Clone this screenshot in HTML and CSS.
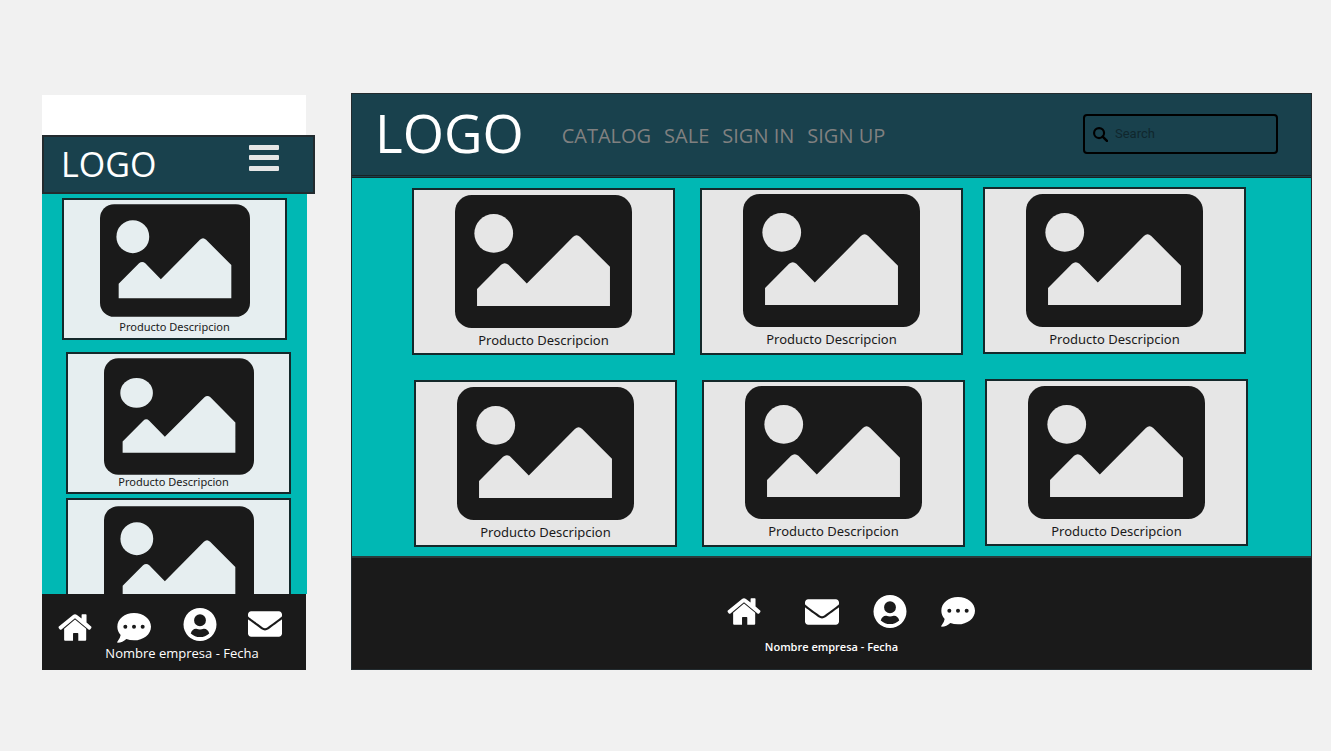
FILE: index.html
```html
<!DOCTYPE html>
<html lang="es">
<head>
<meta charset="utf-8">
<meta name="viewport" content="width=device-width, initial-scale=1">
<title>Wireframes</title>
<link rel="stylesheet" href="styles.css">
</head>
<body>
<svg class="defs" aria-hidden="true">
  <symbol id="picture" viewBox="0 0 530 398"><rect width="530" height="398" rx="50" fill="#1a1a1a"/><circle cx="116" cy="115" r="58" fill="currentColor"/><path fill="currentColor" d="M66 281 138 209Q149 199 160 209L215 265 353 126Q364 115 375 126L464 215V332H66z"/></symbol>
  <symbol id="picture-tall" viewBox="0 0 451 350"><rect width="451" height="350" rx="43" fill="#1a1a1a"/><ellipse cx="98" cy="104" rx="49" ry="45" fill="currentColor"/><path fill="currentColor" d="M56 250 118 188Q127 179 136 188L183 236 302 117Q311 109 320 117L395 193V284H56z"/></symbol>
  <symbol id="home" viewBox="0 0 100 82"><path d="M50 17 84 45V78Q84 81 81 81H60V60Q60 58 58 58H46Q44 58 44 60V81H20Q17 81 17 78V45z"/><path d="M44 3Q50-2 56 3L70 14V3Q70 1 72 1H83Q85 1 85 3V26L99 38Q101 40 99 43L96 47Q94 49 91 47L50 13 9 47Q6 49 4 47L1 43Q-1 40 1 38z"/></symbol>
  <symbol id="mail" viewBox="0 64 512 384"><path d="M502.3 190.8c3.9-3.1 9.7-.2 9.7 4.7V400c0 26.500-21.500 48-48 48H48c-26.500 0-48-21.500-48-48V195.600c0-5 5.700-7.800 9.700-4.700 22.400 17.400 52.100 39.500 154.100 113.600 21.100 15.400 56.700 47.800 92.200 47.600 35.700.3 72-32.800 92.300-47.600 102-74.100 131.600-96.300 154-113.700zM256 320c23.200.4 56.600-29.200 73.400-41.400 132.700-96.300 142.800-104.700 173.400-128.700 5.800-4.500 9.200-11.500 9.200-18.900v-19c0-26.500-21.500-48-48-48H48c-26.500 0-48 21.500-48 48v19c0 7.400 3.400 14.300 9.200 18.900 30.600 23.900 40.700 32.400 173.400 128.700 16.800 12.200 50.200 41.800 73.400 41.400z"/></symbol>
  <symbol id="user" viewBox="0 0 100 100"><path fill-rule="evenodd" d="M50 0a50 50 0 1 0 0 100A50 50 0 1 0 50 0zM50 19a18 18 0 1 1 0 36 18 18 0 1 1 0-36zM22 77Q27 62 39 63Q50 67 61 63Q73 62 78 77Q66 88 50 88T22 77z"/></symbol>
  <symbol id="chat" viewBox="0 0 102 90"><path fill-rule="evenodd" d="M51 0C79 0 102 18 102 41S79 82 51 82Q38 82 28 78Q17 89 2 89Q-1 88 2 85Q9 77 11 66Q1 55 1 41C1 18 23 0 51 0zM25 35a6 6 0 1 0 0 12 6 6 0 1 0 0-12zM51 35a6 6 0 1 0 0 12 6 6 0 1 0 0-12zM77 35a6 6 0 1 0 0 12 6 6 0 1 0 0-12z"/></symbol>
</svg>

<section class="phone" aria-label="Mobile">
  <div class="phone-status"></div>
  <header class="phone-header">
    <span class="phone-logo">LOGO</span>
    <button class="menu" aria-label="Menu"><svg viewBox="0 0 30 26"><path d="M1 0H29Q30 0 30 1V4Q30 5 29 5H1Q0 5 0 4V1Q0 0 1 0zM1 10H29Q30 10 30 11V14Q30 15 29 15H1Q0 15 0 14V11Q0 10 1 10zM1 21H29Q30 21 30 22V25Q30 26 29 26H1Q0 26 0 25V22Q0 21 1 21z"/></svg></button>
  </header>
  <main class="phone-main">
    <article class="phone-card first"><svg class="phone-pic"><use href="#picture"/></svg><p>Producto Descripcion</p></article>
    <article class="phone-card second"><svg class="phone-pic tall"><use href="#picture-tall"/></svg><p>Producto Descripcion</p></article>
    <article class="phone-card third"><svg class="phone-pic"><use href="#picture"/></svg></article>
  </main>
  <footer class="phone-footer">
    <nav class="phone-icons" aria-label="Mobile">
      <a class="icon home" href="#" aria-label="Home"><svg><use href="#home"/></svg></a>
      <a class="icon chat" href="#" aria-label="Chat"><svg><use href="#chat"/></svg></a>
      <a class="icon user" href="#" aria-label="Account"><svg><use href="#user"/></svg></a>
      <a class="icon mail" href="#" aria-label="Mail"><svg><use href="#mail"/></svg></a>
    </nav>
    <p class="phone-company">Nombre empresa - Fecha</p>
  </footer>
</section>

<section class="desktop" aria-label="Desktop">
  <header class="header">
    <span class="logo">LOGO</span>
    <nav class="links" aria-label="Main">
      <a href="#">CATALOG</a><a href="#">SALE</a><a href="#">SIGN IN</a><a href="#">SIGN UP</a>
    </nav>
    <label class="search">
      <svg viewBox="0 0 42 42" aria-hidden="true"><circle cx="17" cy="17" r="14" fill="none" stroke="#000" stroke-width="6"/><path d="M27 27 39 39" stroke="#000" stroke-width="7" stroke-linecap="round"/></svg>
      <input type="search" placeholder="Search" aria-label="Search">
    </label>
  </header>
  <main class="catalog">
    <div class="row">
      <article class="card"><svg class="pic"><use href="#picture"/></svg><p>Producto Descripcion</p></article>
      <article class="card"><svg class="pic"><use href="#picture"/></svg><p>Producto Descripcion</p></article>
      <article class="card"><svg class="pic"><use href="#picture"/></svg><p>Producto Descripcion</p></article>
    </div>
    <div class="row lower">
      <article class="card"><svg class="pic"><use href="#picture"/></svg><p>Producto Descripcion</p></article>
      <article class="card"><svg class="pic"><use href="#picture"/></svg><p>Producto Descripcion</p></article>
      <article class="card"><svg class="pic"><use href="#picture"/></svg><p>Producto Descripcion</p></article>
    </div>
  </main>
  <footer class="footer">
    <nav class="icons" aria-label="Footer">
      <a class="icon home" href="#" aria-label="Home"><svg><use href="#home"/></svg></a>
      <a class="icon mail" href="#" aria-label="Mail"><svg><use href="#mail"/></svg></a>
      <a class="icon user" href="#" aria-label="Account"><svg><use href="#user"/></svg></a>
      <a class="icon chat" href="#" aria-label="Chat"><svg><use href="#chat"/></svg></a>
    </nav>
    <p class="company">Nombre empresa - Fecha</p>
  </footer>
</section>
</body>
</html>
```
FILE: styles.css
```css
* { box-sizing: border-box; }

body {
  margin: 0;
  padding: 93px 19px 81px 42px;
  display: grid;
  grid-template-columns: 264fr 961fr;
  gap: 45px;
  align-items: start;
  background: #f1f1f1;
  color: #1a1a1a;
  font-family: "Open Sans", "Noto Sans", sans-serif;
}

p { margin: 0; }
a { text-decoration: none; }
svg { display: block; }
.defs { position: absolute; width: 0; height: 0; }

/* Mobile frame */
.phone { padding-top: 2px; }
.phone-status { height: 40px; background: #fff; }

.phone-header {
  display: flex;
  justify-content: space-between;
  align-items: flex-start;
  height: 59px;
  margin-right: -9px;
  padding: 6px 34px 0 17px;
  background: #19414d;
  border: 2px solid #222b2f;
}
.phone-logo { color: #fff; font-size: 34px; line-height: 42px; }
.menu { width: 30px; height: 26px; margin-top: 2px; padding: 0; border: 0; background: none; }
.menu svg { width: 30px; height: 26px; fill: #e6e6e6; }

.phone-main {
  height: 400px;
  margin-right: -1px;
  padding: 4px 16px 0 24px;
  background: #00b8b4;
  overflow: hidden;
}
.phone-card {
  display: flex;
  flex-direction: column;
  align-items: center;
  height: 142px;
  padding-top: 4px;
  background: #e6eef0;
  border: 2px solid #14292b;
  color: #e6eef0;
}
.phone-card p { color: #1a1a1a; font-family: "Noto Sans", sans-serif; font-size: 11px; line-height: 16px; }
.phone-pic { width: 150px; height: 113px; margin-bottom: 2px; }
.phone-pic.tall { height: 117px; margin-bottom: -1px; }
.first { margin: 0 4px 12px -4px; }
.second { margin-bottom: 4px; }
.second p { padding-right: 10px; }
.third { padding-top: 6px; }

.phone-footer { height: 76px; background: #1a1a1a; text-align: center; }
.phone-icons {
  display: flex;
  justify-content: space-between;
  align-items: flex-start;
  height: 50px;
  padding: 14px 24px 0 16px;
}
.phone-company { padding-left: 16px; color: #fff; font-size: 13px; line-height: 18px; }

.icon svg { width: 34px; height: 33px; fill: #fff; }
.icon.home svg { height: 27px; }
.icon.mail svg { height: 26px; }
.icon.chat svg { height: 30px; }
.phone-icons .home { margin-top: 6px; margin-right: -6px; }
.phone-icons .chat { margin-top: 5px; }
.phone-icons .mail { margin-top: 3px; }

/* Desktop frame */
.desktop { border: 1px solid #222b2f; }
.header {
  display: flex;
  align-items: center;
  height: 84px;
  padding: 0 33px 0 23px;
  background: #19414d;
  border-bottom: 3px double #1a2224;
}
.logo { margin-right: 38px; color: #fff; font-size: 53px; line-height: 76px; padding-bottom: 4px; }
.links { display: flex; gap: 13px; padding-top: 2px; }
.links a { color: #808080; font-size: 20px; line-height: 28px; }
.search {
  display: flex;
  align-items: center;
  gap: 7px;
  width: 195px;
  height: 40px;
  margin-left: auto;
  margin-bottom: 1px;
  padding: 0 8px;
  border: 2px solid #000;
  border-radius: 4px;
}
.search svg { width: 15px; height: 15px; flex: none; }
.search input {
  width: 100%;
  padding: 0;
  border: 0;
  outline: 0;
  background: none;
  color: #1a1a1a;
  font: 13px/16px Roboto, sans-serif;
}
.search input::placeholder { color: #10272d; opacity: 1; }

.catalog { padding: 9px 0; background: #00b8b4; }
.row { display: flex; padding: 0 65px 0 60px; }
.row.lower { margin-top: 24px; padding: 0 63px 0 62px; }
.card {
  flex: 1;
  display: flex;
  flex-direction: column;
  align-items: center;
  height: 167px;
  margin: 1px 0 0;
  padding-top: 5px;
  background: #e6e6e6;
  border: 2px solid #14292b;
  color: #e6e6e6;
}
.card:nth-child(2) { margin-left: 25px; margin-right: 20px; }
.card:nth-child(2) { padding-top: 4px; }
.card:nth-child(3) { margin-top: 0; margin-bottom: 1px; }
.card p { color: #1a1a1a; font-family: "Noto Sans", sans-serif; font-size: 13px; line-height: 18px; }
.pic { width: 177px; height: 133px; margin-bottom: 3px; }

.footer {
  height: 113px;
  padding-top: 37px;
  background: #1a1a1a;
  border-top: 2px solid #2a3b3b;
}
.icons {
  display: flex;
  justify-content: center;
  align-items: center;
  gap: 34px;
  height: 33px;
  padding-left: 38px;
}
.icons .home { margin-right: 10px; }
.company { padding-top: 11px; color: #fff; font-size: 11px; font-weight: 600; line-height: 16px; text-align: center; }
```
